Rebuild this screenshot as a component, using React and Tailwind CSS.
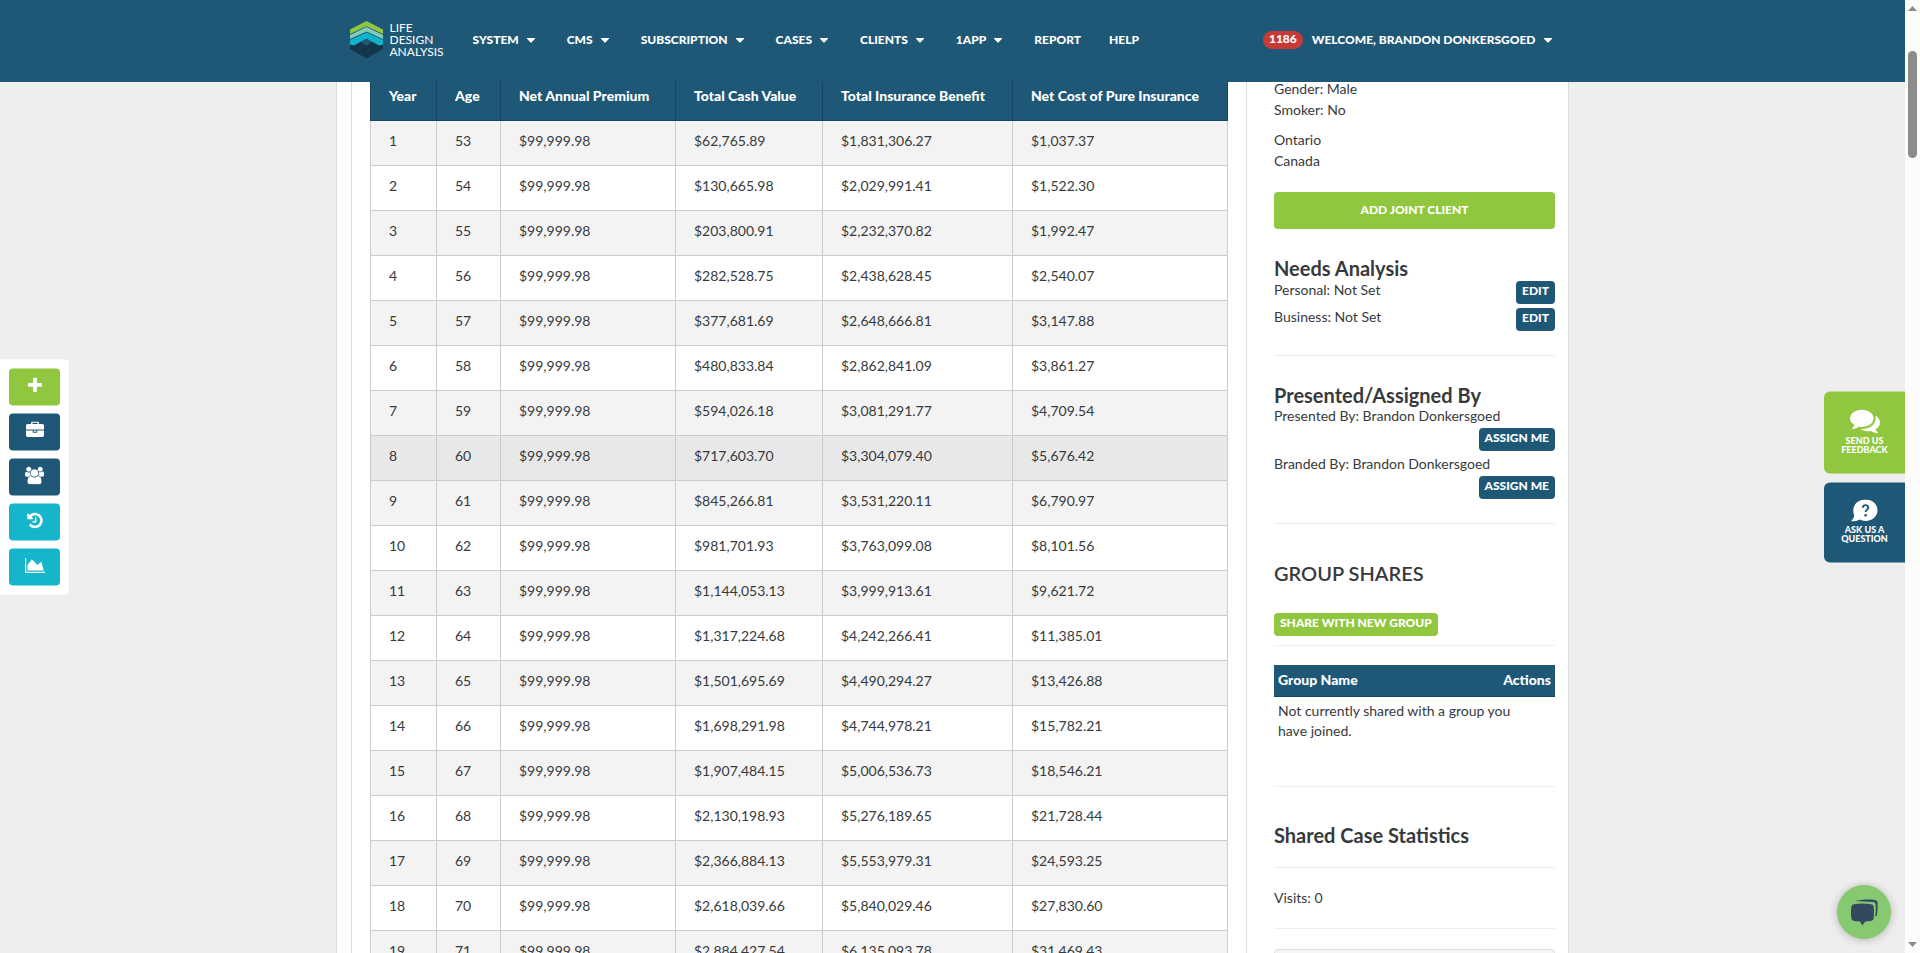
import React from "react";

const NAV = [
  { label: "SYSTEM", menu: true },
  { label: "CMS", menu: true },
  { label: "SUBSCRIPTION", menu: true },
  { label: "CASES", menu: true },
  { label: "CLIENTS", menu: true },
  { label: "1APP", menu: true },
  { label: "REPORT" },
  { label: "HELP" },
];

const COLUMNS = [
  { label: "Year", width: "w-[66px]" },
  { label: "Age", width: "w-[64px]" },
  { label: "Net Annual Premium", width: "w-[175px]" },
  { label: "Total Cash Value", width: "w-[147px]" },
  { label: "Total Insurance Benefit", width: "w-[190px]" },
  { label: "Net Cost of Pure Insurance", width: "w-[215px]" },
];

const ROWS = [
  ["$62,765.89", "$1,831,306.27", "$1,037.37"],
  ["$130,665.98", "$2,029,991.41", "$1,522.30"],
  ["$203,800.91", "$2,232,370.82", "$1,992.47"],
  ["$282,528.75", "$2,438,628.45", "$2,540.07"],
  ["$377,681.69", "$2,648,666.81", "$3,147.88"],
  ["$480,833.84", "$2,862,841.09", "$3,861.27"],
  ["$594,026.18", "$3,081,291.77", "$4,709.54"],
  ["$717,603.70", "$3,304,079.40", "$5,676.42"],
  ["$845,266.81", "$3,531,220.11", "$6,790.97"],
  ["$981,701.93", "$3,763,099.08", "$8,101.56"],
  ["$1,144,053.13", "$3,999,913.61", "$9,621.72"],
  ["$1,317,224.68", "$4,242,266.41", "$11,385.01"],
  ["$1,501,695.69", "$4,490,294.27", "$13,426.88"],
  ["$1,698,291.98", "$4,744,978.21", "$15,782.21"],
  ["$1,907,484.15", "$5,006,536.73", "$18,546.21"],
  ["$2,130,198.93", "$5,276,189.65", "$21,728.44"],
  ["$2,366,884.13", "$5,553,979.31", "$24,593.25"],
  ["$2,618,039.66", "$5,840,029.46", "$27,830.60"],
  ["$2,884,427.54", "$6,135,093.78", "$31,469.43"],
];

const ICONS = {
  plus: {
    box: "0 0 1792 1792",
    d: "M1600 736v192q0 40-28 68t-68 28h-416v416q0 40-28 68t-68 28h-192q-40 0-68-28t-28-68v-416h-416q-40 0-68-28t-28-68v-192q0-40 28-68t68-28h416v-416q0-40 28-68t68-28h192q40 0 68 28t28 68v416h416q40 0 68 28t28 68z",
  },
  briefcase: {
    box: "0 0 1792 1792",
    d: "M640 256h512v-128h-512v128zm1152 640v480q0 66-47 113t-113 47h-1472q-66 0-113-47t-47-113v-480h672v160q0 26 19 45t45 19h320q26 0 45-19t19-45v-160h672zm-768 0v128h-256v-128h256zm768-480v384h-1792v-384q0-66 47-113t113-47h352v-160q0-40 28-68t68-28h576q40 0 68 28t28 68v160h352q66 0 113 47t47 113z",
  },
  users: {
    box: "0 0 1920 1792",
    d: "M593 896q-162 5-265 128h-134q-82 0-138-40.5t-56-118.5q0-353 124-353 6 0 43.5 21t97.5 42.5 119 21.5q67 0 133-23-5 37-5 66 0 159 93 286zm1071 637q0 120-73 189.5t-194 69.5h-874q-121 0-194-69.5t-73-189.5q0-53 3.5-103.5t14-109 26.5-108.5 43-97.5 62-81 85.5-53.5 111.5-20q10 0 43 21.5t73 48 107 48 135 21.5 135-21.5 107-48 73-48 43-21.5q61 0 111.5 20t85.5 53.5 62 81 43 97.5 26.5 108.5 14 109 3.5 103.5zm-1024-1277q0 106-75 181t-181 75-181-75-75-181 75-181 181-75 181 75 75 181zm704 384q0 159-112.5 271.5t-271.5 112.5-271.5-112.5-112.5-271.5 112.5-271.5 271.5-112.5 271.5 112.5 112.5 271.5zm576 225q0 78-56 118.5t-138 40.5h-134q-103-123-265-128 93-127 93-286 0-29-5-66 66 23 133 23 59 0 119-21.5t97.5-42.5 43.5-21q124 0 124 353zm-128-609q0 106-75 181t-181 75-181-75-75-181 75-181 181-75 181 75 75 181z",
  },
  history: {
    box: "0 0 1792 1792",
    d: "M1664 896q0 156-61 298t-164 245-245 164-298 61q-172 0-327-72.5t-264-204.5q-7-10-6.5-22.5t8.5-20.5l137-138q10-9 25-9 16 2 23 12 73 95 179 147t225 52q104 0 198.5-40.5t163.5-109.5 109.5-163.5 40.5-198.5-40.5-198.5-109.5-163.5-163.5-109.5-198.5-40.5q-98 0-188 35.5t-160 101.5l137 138q31 30 14 69-17 40-59 40h-448q-26 0-45-19t-19-45v-448q0-42 40-59 39-17 69 14l130 129q107-101 244.5-156.5t284.5-55.5q156 0 298 61t245 164 164 245 61 298zm-640-288v448q0 14-9 23t-23 9h-320q-14 0-23-9t-9-23v-64q0-14 9-23t23-9h224v-352q0-14 9-23t23-9h64q14 0 23 9t9 23z",
  },
  chart: {
    box: "0 0 2048 1792",
    d: "M2048 1536v128h-2048v-1536h128v1408h1920zm-384-1024l256 896h-1664v-576l448-576 576 576z",
  },
  comments: {
    box: "0 0 1792 1792",
    d: "M1408 768q0 139-94 257t-256.5 186.5-353.5 68.5q-86 0-176-16-124 88-278 128-36 9-86 16h-3q-11 0-20.5-8t-11.5-21q-1-3-1-6.5t.5-6.5 2-6l2.5-5t3.5-5.5 4-5 4.5-5 4-4.5q5-6 23-25t26-29.5 22.5-29 25-38.5 20.5-44q-124-72-195-177t-71-224q0-139 94-257t256.5-186.5 353.5-68.5 353.5 68.5 256.5 186.5 94 257zm384 256q0 120-71 224.5t-195 176.5q10 24 20.5 44t25 38.5 22.5 29 26 29.5 23 25q1 1 4 4.5t4.5 5 4 5 3.5 5.5l2.5 5t2 6 .5 6.5-1 6.5q-3 14-13 22t-22 7q-50-7-86-16-154-40-278-128-90 16-176 16-271 0-472-132 58 4 88 4 161 0 309-45t264-129q125-92 192-212t67-254q0-77-23-152 129 71 204 178t75 230z",
  },
};

function Icon({ name, className }) {
  const icon = ICONS[name];
  return (
    <svg viewBox={icon.box} className={className} fill="currentColor" aria-hidden="true">
      <path d={icon.d} />
    </svg>
  );
}

function Caret() {
  return (
    <svg viewBox="0 0 8 5" className="h-[5px] w-2" fill="currentColor" aria-hidden="true">
      <path d="M0 0h8v.8L4.400 4.600q-.4.400-.8 0L0 .8z" />
    </svg>
  );
}

function Logo() {
  return (
    <a href="#home" aria-label="Life Design Analysis" className="flex items-center gap-[7px] text-white">
      <svg viewBox="0 0 33 38" className="h-[38px] w-[33px]" aria-hidden="true">
        <path d="M0 23.500 16.500 15.500 33 23.500V28L16.500 37.500 0 28z" fill="#14364a" />
        <path d="M16.500 16.500 22.500 20.500 16.500 25 10.500 20.500z" fill="#1e5876" />
        <path d="M0 8.500 16.500 0 33 8.500V13L16.500 5.200 0 13z" fill="#91c73e" />
        <path d="M0 13.900 16.500 6 33 13.900V18L16.500 10.600 0 18z" fill="#7fcdb8" />
        <path d="M0 19 16.500 11.400 33 19V23.500L29 24.500 16.500 17.500 4 24.500 0 23.500z" fill="#12b2cb" />
      </svg>
      <span className="flex flex-col text-[12px] leading-[12px] font-normal">
        <span>LIFE</span>
        <span>DESIGN</span>
        <span>ANALYSIS</span>
      </span>
    </a>
  );
}

function Header() {
  return (
    <header className="relative z-10 h-[82px] shrink-0 bg-[#1e5876] text-[12px] leading-5 font-black text-white">
      <div className="mx-auto flex h-20 max-w-[1232px] items-center pr-[17px] pl-[13px]">
        <Logo />
        <nav className="ml-[29px] flex items-center gap-7">
          {NAV.map((item) => (
            <a key={item.label} href="#nav" className={item.menu ? "flex items-center gap-2 pr-1" : ""}>
              {item.label}
              {item.menu && <Caret />}
            </a>
          ))}
        </nav>
        <a href="#account" className="ml-auto flex items-center gap-[9px]">
          <span className="h-[18px] rounded-full bg-[#c73a36] px-1.5 leading-[15px]">1186</span>
          <span className="flex items-center gap-2">
            WELCOME, BRANDON DONKERSGOED
            <Caret />
          </span>
        </a>
      </div>
    </header>
  );
}

function ValuesTable() {
  return (
    <table className="-mt-[7px] w-full table-fixed border-collapse text-left">
      <thead>
        <tr className="h-[45px] bg-[#1e5876] text-[14px] text-white">
          {COLUMNS.map((c) => (
            <th key={c.label} className={`${c.width} border border-[#164560] px-[18px] pb-1.5 font-black whitespace-nowrap`}>
              {c.label}
            </th>
          ))}
        </tr>
      </thead>
      <tbody>
        {ROWS.map((row, i) => (
          <tr
            key={row[0]}
            className={`h-[45px] ${i === 7 ? "bg-[#e8e8e8]" : i % 2 === 0 ? "bg-[#f3f3f3]" : "bg-white"}`}
          >
            {[i + 1, i + 53, "$99,999.98", ...row].map((cell, j) => (
              <td key={j} className="border border-[#cccccc] px-[18px] pb-1.5">
                {cell}
              </td>
            ))}
          </tr>
        ))}
      </tbody>
    </table>
  );
}

function SmallButton({ children, green }) {
  return (
    <button
      className={`h-[23px] rounded px-1.5 pb-1 text-[12px] leading-[18px] font-black text-white ${
        green ? "bg-[#91c73e]" : "bg-[#1e5876]"
      }`}
    >
      {children}
    </button>
  );
}

function Rule() {
  return <hr className="border-t border-[#eeeeee]" />;
}

function Sidebar() {
  return (
    <aside className="w-[323px] shrink-0 border-x border-[#dddddd] pr-[13px] pl-[27px] leading-[21px]">
      <div className="-mt-1">
        <p>Gender: Male</p>
        <p>Smoker: No</p>
      </div>
      <div className="mt-[9px]">
        <p>Ontario</p>
        <p>Canada</p>
      </div>
      <button className="mt-[21px] h-[37px] w-full rounded bg-[#91c73e] pb-0.5 text-[12px] font-black text-white">
        ADD JOINT CLIENT
      </button>

      <section className="mt-[26px] pb-6">
        <h2 className="text-[20px] leading-[26px] font-bold">Needs Analysis</h2>
        <div className="flex justify-between">
          <p className="-mt-0.5">Personal: Not Set</p>
          <SmallButton>EDIT</SmallButton>
        </div>
        <div className="mt-1 flex justify-between">
          <p className="-mt-0.5">Business: Not Set</p>
          <SmallButton>EDIT</SmallButton>
        </div>
      </section>
      <Rule />

      <section className="mt-[26px] pb-6">
        <h2 className="text-[20px] leading-[26px] font-bold">Presented/Assigned By</h2>
        <p className="-mt-[3px]">Presented By: Brandon Donkersgoed</p>
        <div className="mt-0.5 flex justify-end">
          <SmallButton>ASSIGN ME</SmallButton>
        </div>
        <p className="mt-0.5">Branded By: Brandon Donkersgoed</p>
        <div className="mt-0.5 flex justify-end">
          <SmallButton>ASSIGN ME</SmallButton>
        </div>
      </section>
      <Rule />

      <section className="pt-9 pb-[9px]">
        <h2 className="text-[20px] leading-[26px] font-semibold">GROUP SHARES</h2>
        <div className="mt-[27px] flex">
          <SmallButton green>SHARE WITH NEW GROUP</SmallButton>
        </div>
      </section>
      <Rule />

      <table className="mt-[19px] w-full border-collapse text-left">
        <thead>
          <tr className="h-[31px] border-b border-[#164560] bg-[#1e5876] text-[14px] text-white">
            <th className="px-1 pb-0.5 font-black">Group Name</th>
            <th className="px-1 pb-0.5 text-right font-black">Actions</th>
          </tr>
        </thead>
        <tbody>
          <tr>
            <td colSpan={2} className="py-1 pr-6 pl-1 leading-5">
              Not currently shared with a group you have joined.
            </td>
          </tr>
        </tbody>
      </table>
      <div className="h-[41px]" />
      <Rule />

      <h2 className="mt-[35px] pb-[19px] text-[20px] leading-[26px] font-bold">Shared Case Statistics</h2>
      <Rule />
      <p className="mt-[19px] pb-5">Visits: 0</p>
      <Rule />
      <div className="mt-5 h-10 rounded border border-[#dddddd] bg-[#f5f5f5]" />
    </aside>
  );
}

const TOOLS = [
  { icon: "plus", label: "Add", color: "bg-[#91c73e]", size: "size-[18px]" },
  { icon: "briefcase", label: "Cases", color: "bg-[#1e5876]", size: "size-[18px]" },
  { icon: "users", label: "Clients", color: "bg-[#1e5876]", size: "h-[18px] w-[19px]" },
  { icon: "history", label: "History", color: "bg-[#15b6cb]", size: "size-[18px]" },
  { icon: "chart", label: "Reports", color: "bg-[#15b6cb]", size: "h-[18px] w-5" },
];

function ToolDock() {
  return (
    <div className="absolute top-1/2 left-0 z-20 flex -translate-y-1/2 flex-col gap-2 rounded-r bg-white p-[9px]">
      {TOOLS.map((t) => (
        <button
          key={t.icon}
          aria-label={t.label}
          className={`flex h-[37px] w-[51px] items-center justify-center rounded pb-[3px] text-white ${t.color}`}
        >
          <Icon name={t.icon} className={t.size} />
        </button>
      ))}
    </div>
  );
}

function QuestionIcon() {
  return (
    <svg viewBox="0 0 27 22" className="h-[22px] w-[27px]" aria-hidden="true">
      <path
        d="M14.500 0C21.500 0 26.500 4.800 26.500 10.800S21.500 21.500 14.500 21.500c-2.200 0-4.200-.5-6-1.400-1.800 1.200-4.600 1.900-7.500 1.900-.6 0-.8-.6-.4-1 1.300-1.300 2.400-3.200 2.700-4.800C2.500 14.500 2.300 12.700 2.300 10.800 2.300 4.800 7.500 0 14.500 0z"
        fill="white"
      />
      <path d="M11.800 8.300c0-3.600 5.500-3.500 5.500-.3 0 2.300-2.700 2.100-2.700 4.500" fill="none" stroke="#1e5876" strokeWidth="1.900" />
      <circle cx="14.600" cy="15.700" r="1.300" fill="#1e5876" />
    </svg>
  );
}

function HelpDock() {
  return (
    <div className="absolute top-1/2 right-0 z-20 flex -translate-y-1/2 flex-col gap-[9px] text-[9px] leading-[9px] font-black text-white">
      <button className="flex h-[82px] w-[81px] flex-col items-center justify-center rounded-l-md bg-[#91c73e] pb-1.5">
        <Icon name="comments" className="size-[30px]" />
        <span>
          SEND US
          <br />
          FEEDBACK
        </span>
      </button>
      <button className="flex h-20 w-[81px] flex-col items-center justify-center gap-[3px] rounded-l-md bg-[#1e5876] pb-0.5">
        <QuestionIcon />
        <span>
          ASK US A
          <br />
          QUESTION
        </span>
      </button>
    </div>
  );
}

function ChatButton() {
  return (
    <button
      aria-label="Open chat"
      className="absolute right-[14px] bottom-[14px] z-20 flex size-[54px] items-center justify-center rounded-full bg-[#87c971] shadow-[0_1px_8px_rgba(0,0,0,0.25)]"
    >
      <svg viewBox="0 0 28 27" className="h-[27px] w-7" aria-hidden="true">
        <path d="M5 2.200C10 .7 19 .2 25 1c1.800.3 2.500 1.300 2.600 3 .2 4 0 9-.9 12.500-.2.700-.8.900-1.500.9 .6-4 .7-8 .4-11.700-.1-1.600-.9-2.500-2.500-2.700C17.500 2.500 11 2.300 5 2.200z" fill="#34495e" />
        <path d="M4 5.200c5-.9 12-.9 17 0 1.700.3 2.500 1.200 2.700 2.900.4 3.500.4 7.500 0 11-.2 1.700-1 2.600-2.700 2.900-1.900.3-3.900.5-5.900.6L12.500 26.500 10 22.600c-2-.1-4-.3-6-.6-1.700-.3-2.500-1.200-2.700-2.900-.4-3.500-.4-7.500 0-11C1.500 6.400 2.300 5.500 4 5.200z" fill="#34495e" />
      </svg>
    </button>
  );
}

function ScrollTrack() {
  return (
    <div className="flex w-[15px] shrink-0 flex-col items-center justify-between bg-[#fcfcfc] py-1.5" aria-hidden="true">
      <div className="flex flex-col items-center gap-10">
        <svg viewBox="0 0 9 5" className="h-[5px] w-[9px]" fill="#8b8b8b">
          <path d="M4.500 0 9 5H0z" />
        </svg>
        <div className="h-[107px] w-[9px] rounded-full bg-[#8b8b8b]" />
      </div>
      <svg viewBox="0 0 9 5" className="h-[5px] w-[9px]" fill="#8b8b8b">
        <path d="M0 0h9L4.500 5z" />
      </svg>
    </div>
  );
}

export default function App() {
  return (
    <div className="flex h-screen overflow-hidden bg-[#eeeeee] font-['Lato','Liberation_Sans',sans-serif] text-[14px] text-[#373a3c]">
      <div className="relative flex min-w-0 flex-1 flex-col">
        <Header />
        <main className="min-h-0 flex-1 overflow-hidden">
          <div className="mx-auto flex max-w-[1233px] border-l border-[#dddddd] bg-white pl-[14px]">
            <div className="min-w-0 flex-1 border-l border-[#dddddd] pr-[19px] pl-[18px]">
              <ValuesTable />
            </div>
            <Sidebar />
          </div>
        </main>
        <ToolDock />
        <HelpDock />
        <ChatButton />
      </div>
      <ScrollTrack />
    </div>
  );
}
